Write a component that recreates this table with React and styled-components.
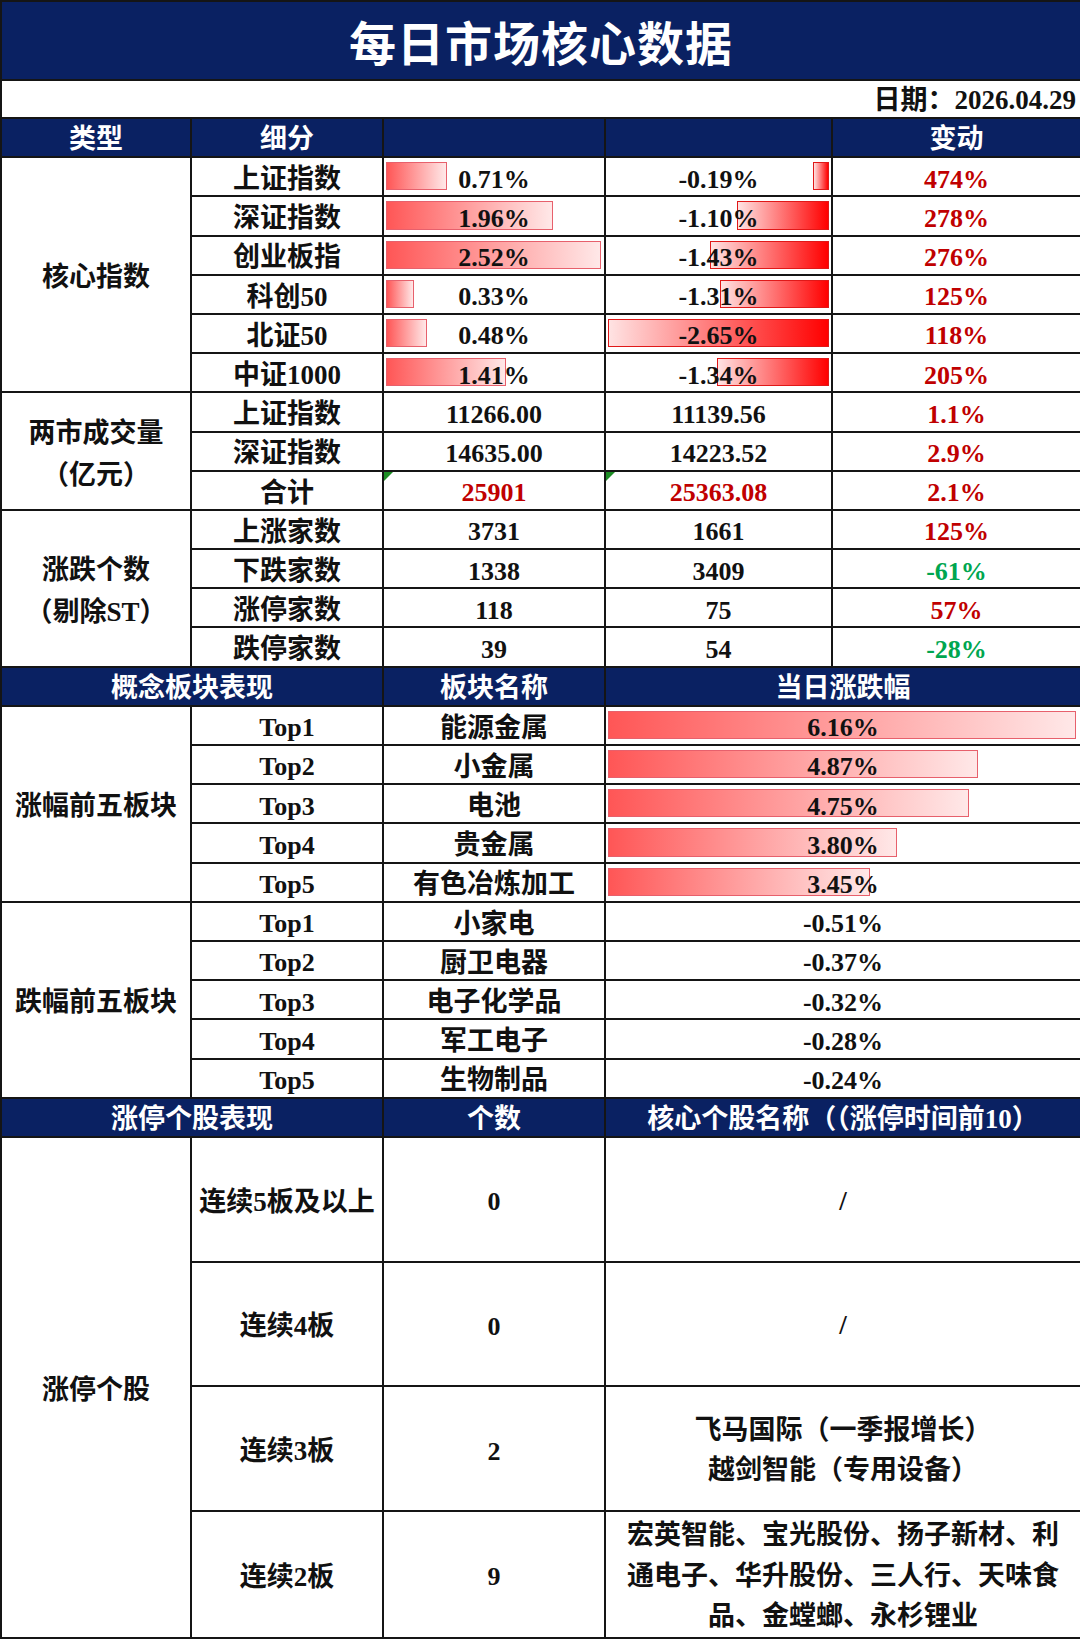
import React from 'react';
import styled, { createGlobalStyle } from 'styled-components';

const GlobalStyle = createGlobalStyle`
  html, body {
    margin: 0;
    padding: 0;
    background: #ffffff;
  }
`;

const NAVY = '#0a2162';
const LINE = '#151515';

const toneColor = (tone) => {
  if (tone === 'red') return '#c00000';
  if (tone === 'green') return '#00a650';
  return '#111111';
};

const Sheet = styled.table`
  width: 1080px;
  border-collapse: collapse;
  table-layout: fixed;
  font-family: "Liberation Serif", "Noto Sans CJK SC", serif;
  font-weight: 700;
  color: #111;
`;

const Row = styled.tr`
  height: ${(p) => p.$h || 39.2}px;
`;

const TitleCell = styled.th`
  background: ${NAVY};
  color: #ffffff;
  border: 2px solid ${LINE};
  font-family: "Noto Sans CJK SC", sans-serif;
  font-size: 47px;
  font-weight: 700;
  letter-spacing: 1px;
  padding: 0;
`;

const DateCell = styled.td`
  border: 2px solid ${LINE};
  text-align: right;
  padding: 0 4px 0 0;
  font-size: 27px;
  vertical-align: bottom;
  line-height: 34px;
`;

const HeadCell = styled.th`
  background: ${NAVY};
  color: #ffffff;
  border: 2px solid ${LINE};
  font-size: 27px;
  font-weight: 700;
  padding: 4px 0 0;
  line-height: 1.05;
`;

const Cell = styled.td`
  position: relative;
  border: 2px solid ${LINE};
  padding: ${(p) => (p.$flush ? '0' : '5px 0 0')};
  text-align: center;
  vertical-align: middle;
  font-size: ${(p) => (p.$label ? 27 : 26)}px;
  line-height: 1.05;
  color: ${(p) => toneColor(p.$tone)};
`;

const Bar = styled.span`
  position: absolute;
  top: 4px;
  bottom: 5px;
  box-sizing: border-box;
  ${(p) =>
    p.$neg
      ? `
    right: 2px;
    background: linear-gradient(to right, #ffe3e3, #ff0000);
    border: 1.5px solid #e01818;
  `
      : `
    left: 2px;
    background: linear-gradient(to right, #ff5656, #ffe8e8);
    border: 1.5px solid #e7606c;
  `}
`;

const Value = styled.span`
  position: relative;
`;

const Flag = styled.span`
  position: absolute;
  top: 0;
  left: 0;
  width: 0;
  height: 0;
  border-top: 9px solid #1c8c24;
  border-right: 9px solid transparent;
`;

const Stack = styled.div`
  line-height: 42px;
`;

const Names = styled.div`
  padding: 3px 20px 0;
  font-size: 27px;
  line-height: 40.5px;
`;

const pct = (v) => `${v < 0 ? '-' : ''}${Math.abs(v).toFixed(2)}%`;

const core = [
  ['上证指数', 0.71, -0.19, '474%'],
  ['深证指数', 1.96, -1.1, '278%'],
  ['创业板指', 2.52, -1.43, '276%'],
  ['科创50', 0.33, -1.31, '125%'],
  ['北证50', 0.48, -2.65, '118%'],
  ['中证1000', 1.41, -1.34, '205%'],
];

const volume = [
  ['上证指数', '11266.00', '11139.56', '1.1%'],
  ['深证指数', '14635.00', '14223.52', '2.9%'],
  ['合计', '25901', '25363.08', '2.1%', true],
];

const breadth = [
  ['上涨家数', '3731', '1661', '125%', 'red'],
  ['下跌家数', '1338', '3409', '-61%', 'green'],
  ['涨停家数', '118', '75', '57%', 'red'],
  ['跌停家数', '39', '54', '-28%', 'green'],
];

const gainers = [
  ['Top1', '能源金属', 6.16],
  ['Top2', '小金属', 4.87],
  ['Top3', '电池', 4.75],
  ['Top4', '贵金属', 3.8],
  ['Top5', '有色冶炼加工', 3.45],
];

const losers = [
  ['Top1', '小家电', '-0.51%'],
  ['Top2', '厨卫电器', '-0.37%'],
  ['Top3', '电子化学品', '-0.32%'],
  ['Top4', '军工电子', '-0.28%'],
  ['Top5', '生物制品', '-0.24%'],
];

const limitUps = [
  ['连续5板及以上', '0', ['/']],
  ['连续4板', '0', ['/']],
  ['连续3板', '2', ['飞马国际（一季报增长）', '越剑智能（专用设备）']],
  ['连续2板', '9', ['宏英智能、宝光股份、扬子新材、利通电子、华升股份、三人行、天味食品、金螳螂、永杉锂业']],
];

const App = () => {
  return (
    <>
      <GlobalStyle />
      <Sheet>
        <colgroup>
          <col style={{ width: 190 }} />
          <col style={{ width: 192 }} />
          <col style={{ width: 222 }} />
          <col style={{ width: 227 }} />
          <col style={{ width: 249 }} />
        </colgroup>
        <tbody>
          <Row $h={79}>
            <TitleCell colSpan={5}>每日市场核心数据</TitleCell>
          </Row>
          <Row $h={38}>
            <DateCell colSpan={5}>日期：2026.04.29</DateCell>
          </Row>
          <Row>
            <HeadCell>类型</HeadCell>
            <HeadCell>细分</HeadCell>
            <HeadCell />
            <HeadCell />
            <HeadCell>变动</HeadCell>
          </Row>

          {core.map(([name, up, down, change], i) => (
            <Row key={name}>
              {i === 0 && (
                <Cell $label rowSpan={core.length}>
                  核心指数
                </Cell>
              )}
              <Cell $label>{name}</Cell>
              <Cell>
                <Bar style={{ width: (up / 2.52) * 215 }} />
                <Value>{pct(up)}</Value>
              </Cell>
              <Cell>
                <Bar $neg style={{ width: (Math.abs(down) / 2.65) * 221 }} />
                <Value>{pct(down)}</Value>
              </Cell>
              <Cell $tone="red">{change}</Cell>
            </Row>
          ))}

          {volume.map(([name, a, b, change, total], i) => (
            <Row key={name}>
              {i === 0 && (
                <Cell $label rowSpan={volume.length}>
                  <Stack>
                    两市成交量
                    <br />
                    （亿元）
                  </Stack>
                </Cell>
              )}
              <Cell $label>{name}</Cell>
              <Cell $tone={total ? 'red' : undefined}>
                {total && <Flag />}
                {a}
              </Cell>
              <Cell $tone={total ? 'red' : undefined}>
                {total && <Flag />}
                {b}
              </Cell>
              <Cell $tone="red">{change}</Cell>
            </Row>
          ))}

          {breadth.map(([name, a, b, change, tone], i) => (
            <Row key={name}>
              {i === 0 && (
                <Cell $label rowSpan={breadth.length}>
                  <Stack>
                    涨跌个数
                    <br />
                    （剔除ST）
                  </Stack>
                </Cell>
              )}
              <Cell $label>{name}</Cell>
              <Cell>{a}</Cell>
              <Cell>{b}</Cell>
              <Cell $tone={tone}>{change}</Cell>
            </Row>
          ))}

          <Row>
            <HeadCell colSpan={2}>概念板块表现</HeadCell>
            <HeadCell>板块名称</HeadCell>
            <HeadCell colSpan={2}>当日涨跌幅</HeadCell>
          </Row>

          {gainers.map(([rank, name, v], i) => (
            <Row key={rank}>
              {i === 0 && (
                <Cell $label rowSpan={gainers.length}>
                  涨幅前五板块
                </Cell>
              )}
              <Cell>{rank}</Cell>
              <Cell $label>{name}</Cell>
              <Cell colSpan={2}>
                <Bar style={{ width: (v / 6.16) * 468 }} />
                <Value>{pct(v)}</Value>
              </Cell>
            </Row>
          ))}

          {losers.map(([rank, name, v], i) => (
            <Row key={rank}>
              {i === 0 && (
                <Cell $label rowSpan={losers.length}>
                  跌幅前五板块
                </Cell>
              )}
              <Cell>{rank}</Cell>
              <Cell $label>{name}</Cell>
              <Cell colSpan={2}>{v}</Cell>
            </Row>
          ))}

          <Row>
            <HeadCell colSpan={2}>涨停个股表现</HeadCell>
            <HeadCell>个数</HeadCell>
            <HeadCell colSpan={2}>核心个股名称（（涨停时间前10）</HeadCell>
          </Row>

          {limitUps.map(([tier, count, names], i) => (
            <Row key={tier} $h={124.8}>
              {i === 0 && (
                <Cell $label rowSpan={limitUps.length}>
                  涨停个股
                </Cell>
              )}
              <Cell $label>{tier}</Cell>
              <Cell>{count}</Cell>
              <Cell $flush colSpan={2}>
                <Names>
                  {names.map((line) => (
                    <div key={line}>{line}</div>
                  ))}
                </Names>
              </Cell>
            </Row>
          ))}
        </tbody>
      </Sheet>
    </>
  );
};

export default App;
